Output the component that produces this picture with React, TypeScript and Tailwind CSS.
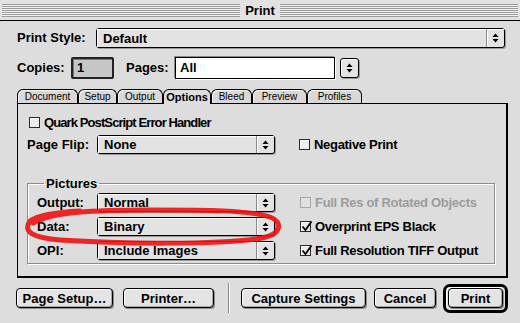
import React from "react";

const stripes =
  "h-[13px] flex-1 bg-[repeating-linear-gradient(to_bottom,#9a9a9a_0px,#9a9a9a_1px,#f2f2f2_1px,#f2f2f2_2px)]";

function Arrows() {
  return (
    <svg width="7" height="10" viewBox="0 0 7 10">
      <path d="M3.5 0.5 L6.5 4 L0.5 4 Z M0.5 6 L6.5 6 L3.5 9.5 Z" fill="#000" />
    </svg>
  );
}

function Popup({ value, className = "" }: { value: string; className?: string }) {
  return (
    <div
      className={`flex h-[19px] rounded-[3px] border border-black bg-[#e3e3e3] shadow-[1px_1px_0_#9a9a9a] ${className}`}
    >
      <div className="flex flex-1 items-center pl-[6px] text-[13px] font-bold leading-none shadow-[inset_1px_1px_0_#fff]">
        {value}
      </div>
      <div className="flex w-[18px] items-center justify-center border-l border-[#8a8a8a] shadow-[inset_1px_1px_0_#fff]">
        <Arrows />
      </div>
    </div>
  );
}

function CheckBox({
  label,
  checked = false,
  disabled = false,
  tight = false,
}: {
  label: string;
  checked?: boolean;
  disabled?: boolean;
  tight?: boolean;
}) {
  return (
    <div
      className={`flex items-center gap-[4px] text-[13px] font-bold leading-none ${
        disabled ? "text-[#9c9c9c]" : "text-black"
      }`}
    >
      <div
        className={`relative h-[11px] w-[11px] shrink-0 border ${
          disabled ? "border-[#a8a8a8] bg-[#e0e0e0]" : "border-[#2a2a2a] bg-[#ececec] shadow-[inset_1px_1px_0_#fff]"
        }`}
      >
        {checked && (
          <svg className="absolute -top-[2px] left-0" width="12" height="12" viewBox="0 0 12 12">
            <path d="M1.5 6.5 L4.5 10 L10.5 1.5" stroke="#000" strokeWidth="1.8" fill="none" />
          </svg>
        )}
      </div>
      <span className={tight ? "tracking-[-0.9px]" : "tracking-[-0.3px]"}>{label}</span>
    </div>
  );
}

function Btn({ children, className = "" }: { children: React.ReactNode; className?: string }) {
  return (
    <div
      className={`flex h-[20px] items-center justify-center rounded-[4px] border border-black bg-[#e4e4e4] text-[13px] font-bold leading-none shadow-[inset_1px_1px_0_#fff,inset_-1px_-1px_0_#a8a8a8,1px_1px_0_#8c8c8c] ${className}`}
    >
      {children}
    </div>
  );
}

const tabs = [
  { name: "Document", w: "w-[61px]" },
  { name: "Setup", w: "w-[39px]" },
  { name: "Output", w: "w-[46px]" },
  { name: "Options", w: "w-[48px]", active: true },
  { name: "Bleed", w: "w-[41px]" },
  { name: "Preview", w: "w-[55px]" },
  { name: "Profiles", w: "w-[55px]" },
];

export default function App() {
  return (
    <div className="relative h-[323px] w-[520px] overflow-hidden bg-[#dddddd] font-['Liberation_Sans',Arial,sans-serif] text-black">
      {/* Title bar */}
      <div className="flex h-[21px] items-center border-b border-black bg-[#e2e2e2] px-[2px]">
        <div className={stripes} />
        <div className="px-[5px] text-[13px] font-bold leading-none">Print</div>
        <div className={stripes} />
      </div>

      <div className="flex flex-col pl-[17px] pr-[12px] pt-[7px]">
        {/* Print style */}
        <div className="flex h-[20px] items-center pr-[3px]">
          <div className="w-[79px] text-[13px] font-bold">Print Style:</div>
          <Popup value="Default" className="h-[20px] flex-1" />
        </div>

        {/* Copies / Pages */}
        <div className="mt-[9px] flex h-[22px] items-center">
          <div className="w-[54px] text-[13px] font-bold">Copies:</div>
          <div className="flex h-[22px] w-[43px] items-center rounded-[2px] border-2 border-[#222] bg-[#c6c6c6] pl-[4px] text-[13px] font-bold shadow-[inset_1px_1px_0_#7a7a7a]">
            1
          </div>
          <div className="ml-[12px] w-[49px] text-[13px] font-bold">Pages:</div>
          <div className="flex h-[22px] w-[160px] items-center border border-black bg-white pl-[4px] text-[13px] font-bold shadow-[1px_1px_0_#fff,-1px_-1px_0_#8a8a8a]">
            All
          </div>
          <div className="ml-[5px] flex h-[20px] w-[19px] items-center justify-center rounded-[3px] border border-black bg-[#e3e3e3] shadow-[inset_1px_1px_0_#fff,1px_1px_0_#9a9a9a]">
            <Arrows />
          </div>
        </div>

        {/* Tabs */}
        <div className="mt-[10px] flex h-[14px] items-end">
          {tabs.map((t) => (
            <div
              key={t.name}
              className={`${t.w} flex items-center justify-center rounded-t-[6px] border border-b-0 border-black text-[10px] leading-none ${
                t.active
                  ? "relative z-10 -mb-px h-[15px] bg-[#dddddd] text-[11px] font-bold"
                  : "h-[14px] bg-[#d8d8d8] shadow-[inset_1px_1px_0_#f4f4f4]"
              }`}
            >
              {t.name}
            </div>
          ))}
        </div>

        {/* Panel */}
        <div className="flex h-[175px] flex-col border border-b-2 border-r-2 border-black pl-[9px]">
          <div className="ml-[2px] mt-[11px] flex h-[14px] items-center">
            <CheckBox label="Quark PostScript Error Handler" tight />
          </div>

          <div className="mt-[6px] flex h-[19px] items-center">
            <div className="w-[70px] text-[13px] font-bold">Page Flip:</div>
            <Popup value="None" className="w-[178px]" />
            <div className="ml-[24px]">
              <CheckBox label="Negative Print" />
            </div>
          </div>

          <fieldset className="mt-[22px] w-[468px] border border-[#8c8c8c] pb-[3px] pl-[9px] shadow-[1px_1px_0_#fff,inset_1px_1px_0_#fff]">
            <legend className="ml-[7px] px-[2px] text-[13px] font-bold leading-[15px]">Pictures</legend>
            <div className="mt-[2px] flex flex-col gap-[5px]">
              <div className="flex h-[19px] items-center">
                <div className="w-[60px] text-[13px] font-bold">Output:</div>
                <Popup value="Normal" className="w-[178px]" />
                <div className="ml-[25px]">
                  <CheckBox label="Full Res of Rotated Objects" disabled />
                </div>
              </div>
              <div className="flex h-[19px] items-center">
                <div className="w-[60px] text-[13px] font-bold">Data:</div>
                <Popup value="Binary" className="w-[178px]" />
                <div className="ml-[25px]">
                  <CheckBox label="Overprint EPS Black" checked />
                </div>
              </div>
              <div className="flex h-[19px] items-center">
                <div className="w-[60px] text-[13px] font-bold">OPI:</div>
                <Popup value="Include Images" className="w-[178px]" />
                <div className="ml-[25px]">
                  <CheckBox label="Full Resolution TIFF Output" checked />
                </div>
              </div>
            </div>
          </fieldset>
        </div>

        {/* Buttons */}
        <div className="mt-[4px] flex h-[32px] items-center">
          <Btn className="-ml-px w-[97px]">Page Setup…</Btn>
          <Btn className="ml-[10px] w-[91px]">Printer…</Btn>
          <div className="ml-[14px] h-[30px] w-[2px] border-l border-[#8a8a8a] bg-white" />
          <Btn className="ml-[11px] w-[125px]">Capture Settings</Btn>
          <Btn className="ml-[8px] w-[62px]">Cancel</Btn>
          <div className="ml-[7px] flex h-[29px] w-[65px] items-center justify-center rounded-[7px] border-[3px] border-black bg-[#dddddd] shadow-[inset_1px_1px_0_#fff]">
            <Btn className="w-[55px]">Print</Btn>
          </div>
        </div>
      </div>

      {/* Red hand-drawn ellipse annotation */}
      <svg className="pointer-events-none absolute left-0 top-0" width="520" height="323" viewBox="0 0 520 323">
        <path
          d="M33 223 C52 212 95 210 150 210 C205 210 250 210 270 217 C283 222 282 234 262 238 C220 245 120 244 60 240 C34 238 22 232 30 221 C40 214 60 212 80 211"
          stroke="#ee1111"
          strokeWidth="5"
          strokeLinecap="round"
          fill="none"
          opacity="0.9"
        />
      </svg>
    </div>
  );
}
